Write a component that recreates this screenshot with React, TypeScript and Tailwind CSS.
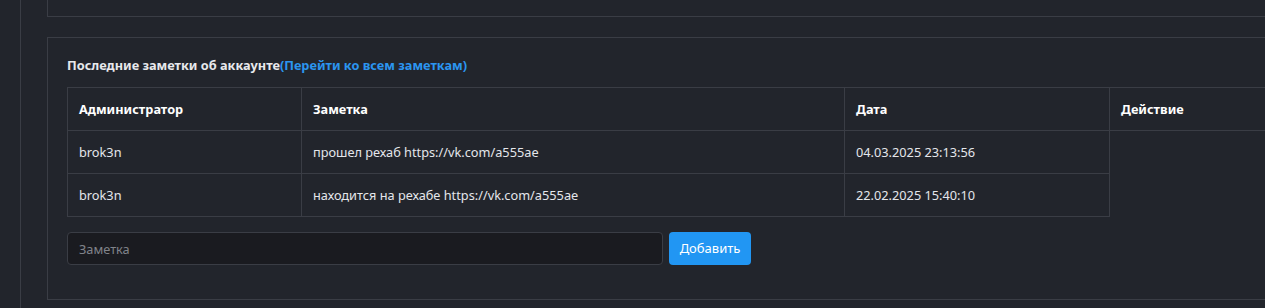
import React from 'react';

const notes = [
  { admin: 'brok3n', text: 'прошел рехаб https://vk.com/a555ae', date: '04.03.2025 23:13:56' },
  { admin: 'brok3n', text: 'находится на рехабе https://vk.com/a555ae', date: '22.02.2025 15:40:10' },
];

export default function App() {
  return (
    <div
      className="w-[1265px] h-[308px] overflow-hidden bg-[#22252c] text-[#e4e6eb] flex"
      style={{ fontFamily: '"Noto Sans", "Open Sans", sans-serif' }}
    >
      {/* Sidebar edge */}
      <div className="w-[21px] shrink-0 border-r border-[#3a3d45]" />

      <div className="pl-[26px] flex flex-col shrink-0">
        {/* Previous card (bottom edge only visible) */}
        <div className="w-[1400px] h-[17px] border-l border-b border-[#3a3d45]" />

        {/* Notes card */}
        <div className="mt-[20px] w-[1400px] h-[263px] border border-[#3a3d45] pl-[19px] pt-[18px]">
          <div className="text-[12.75px] font-bold leading-[18px] mb-[13px]">
            <span className="text-[#e8e9ec]">Последние заметки об аккаунте</span>
            <a className="text-[#2b95f0] cursor-pointer">(Перейти ко всем заметкам)</a>
          </div>

          <table className="border-collapse text-[12.75px] table-fixed">
            <colgroup>
              <col className="w-[234px]" />
              <col className="w-[543px]" />
              <col className="w-[265px]" />
              <col className="w-[300px]" />
            </colgroup>
            <thead>
              <tr>
                {['Администратор', 'Заметка', 'Дата', 'Действие'].map((h) => (
                  <th
                    key={h}
                    className="border border-[#3a3d45] text-left font-bold text-white px-[11px] h-[43px] leading-[18px]"
                  >
                    {h}
                  </th>
                ))}
              </tr>
            </thead>
            <tbody>
              {notes.map((n, i) => (
                <tr key={i}>
                  <td className="border border-[#3a3d45] px-[11px] h-[43px] leading-[18px]">{n.admin}</td>
                  <td className="border border-[#3a3d45] px-[11px] h-[43px] leading-[18px]">{n.text}</td>
                  <td className="border border-[#3a3d45] px-[11px] h-[43px] leading-[18px]">{n.date}</td>
                </tr>
              ))}
            </tbody>
          </table>

          <div className="flex gap-[6px] mt-[15px]">
            <input
              placeholder="Заметка"
              className="w-[596px] h-[33px] rounded-[4px] border border-[#3a3d45] bg-[#1a1b20] px-[11px] text-[12.75px] text-[#e4e6eb] placeholder:text-[#80838a] outline-none"
            />
            <button className="h-[33px] w-[82px] rounded-[4px] bg-[#2196f3] text-white text-[13px]">
              Добавить
            </button>
          </div>
        </div>
      </div>
    </div>
  );
}
